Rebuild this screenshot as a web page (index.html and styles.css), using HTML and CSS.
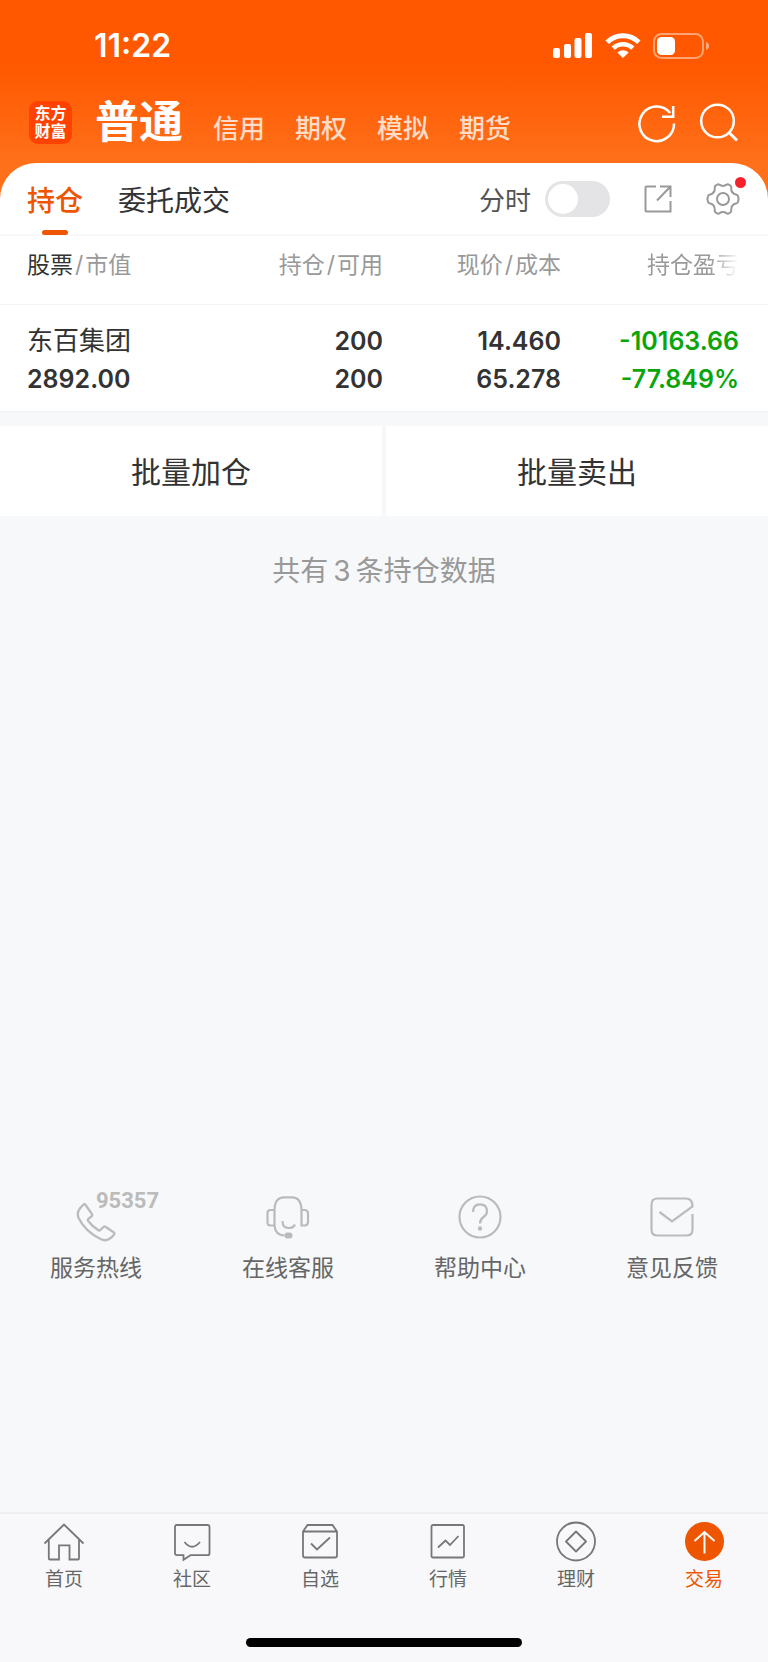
FILE: index.html
```html
<!DOCTYPE html>
<html lang="zh-CN">
<head>
<meta charset="utf-8">
<meta name="viewport" content="width=device-width, initial-scale=1">
<title>普通交易 - 持仓</title>
<link rel="stylesheet" href="styles.css">
</head>
<body>
<header class="top">
  <div class="status">
    <time class="clock">11:22</time>
    <div class="signals">
      <svg width="40" height="26" viewBox="0 0 40 26" fill="#fff" aria-hidden="true">
        <rect x="0" y="15" width="7" height="10" rx="2"/><rect x="11" y="11" width="7" height="14" rx="2"/><rect x="21.500" y="5" width="7" height="20" rx="2"/><rect x="32" y="0" width="7" height="25" rx="2"/>
      </svg>
      <svg width="36" height="26" viewBox="0 0 36 26" fill="none" stroke="#fff" aria-hidden="true">
        <path d="M2.200 9.200A22.500 22.500 0 0 1 33.800 9.200" stroke-width="5"/>
        <path d="M8.200 15.200A14 14 0 0 1 27.800 15.200" stroke-width="4.600"/>
        <path d="M18 25l-5.600-5.500a8 8 0 0 1 11.200 0z" fill="#fff" stroke="none"/>
      </svg>
      <svg width="57" height="26" viewBox="0 0 57 26" aria-hidden="true">
        <rect x="1" y="1" width="49" height="24" rx="7.500" fill="none" stroke="#fff" stroke-opacity=".45" stroke-width="2"/>
        <rect x="4" y="4" width="18" height="18" rx="4.500" fill="#fff"/>
        <path d="M53 9q3 1.200 3 4t-3 4z" fill="#fff" fill-opacity=".5"/>
      </svg>
    </div>
  </div>
  <div class="bar">
    <div class="logo">东方<br>财富</div>
    <nav class="accounts">
      <a class="account current" href="#">普通</a>
      <a class="account" href="#">信用</a>
      <a class="account" href="#">期权</a>
      <a class="account" href="#">模拟</a>
      <a class="account" href="#">期货</a>
    </nav>
    <button class="icon-btn" aria-label="刷新">
      <svg width="40" height="40" viewBox="0 0 40 40" fill="none" stroke="#fff" stroke-width="2.500">
        <path d="M37 20.500A17.300 17.300 0 1 1 33.200 10"/><path d="M36.200 3v10.700H25"/>
      </svg>
    </button>
    <button class="icon-btn" aria-label="搜索">
      <svg width="40" height="40" viewBox="0 0 40 40" fill="none" stroke="#fff" stroke-width="2.500">
        <circle cx="18.500" cy="18" r="16.300"/><path d="M29.500 29l8.500 8.500" stroke-width="3"/>
      </svg>
    </button>
  </div>
</header>

<main class="sheet">
  <div class="tabs">
    <a class="tab active" href="#">持仓</a>
    <a class="tab" href="#">委托成交</a>
    <label class="chart-label" for="chart">分时</label>
    <input class="switch" id="chart" type="checkbox" role="switch">
    <button class="icon-btn share" aria-label="分享">
      <svg width="28" height="28" viewBox="0 0 28 28" fill="none" stroke="#999" stroke-width="2">
        <path d="M12 1.500H2.500q-1 0-1 1v23q0 1 1 1h24v-10.500"/><path d="M16 1.500h10.500V12M26.500 1.500L13 15.500"/>
      </svg>
    </button>
    <button class="icon-btn settings" aria-label="设置">
      <svg width="34" height="34" viewBox="0 0 34 34" fill="none" stroke="#999" stroke-width="2" stroke-linejoin="round">
        <path d="M11.500 2.500Q12.500 2 13.300 2.700Q17 5.200 20.700 2.700Q21.500 2 22.500 2.500L24.500 3.700Q25.500 4.300 25.200 5.500Q24.800 11.500 30.500 12.700Q31.800 13 32 14.200L32.600 17L32 19.800Q31.800 21 30.500 21.300Q24.800 22.500 25.200 28.500Q25.500 29.700 24.500 30.300L22.500 31.500Q21.500 32 20.700 31.300Q17 28.800 13.300 31.300Q12.500 32 11.500 31.500L9.500 30.300Q8.500 29.700 8.800 28.500Q9.200 22.500 3.500 21.300Q2.200 21 2 19.800L1.400 17L2 14.200Q2.200 13 3.500 12.700Q9.200 11.500 8.800 5.500Q8.500 4.300 9.500 3.700Z"/>
        <circle cx="17" cy="17" r="6"/>
      </svg>
      <span class="dot"></span>
    </button>
  </div>

  <table class="holdings">
    <thead>
      <tr>
        <th><span class="strong">股票</span><span class="slash">/</span>市值</th>
        <th>持仓<span class="slash">/</span>可用</th>
        <th>现价<span class="slash">/</span>成本</th>
        <th><span class="fade">持仓盈亏</span></th>
      </tr>
    </thead>
    <tbody>
      <tr class="first"><td class="name">东百集团</td><td>200</td><td>14.460</td><td class="loss">-10163.66</td></tr>
      <tr class="second"><td>2892.00</td><td>200</td><td>65.278</td><td class="loss">-77.849%</td></tr>
    </tbody>
  </table>

  <div class="batch">
    <button class="batch-btn">批量加仓</button>
    <button class="batch-btn">批量卖出</button>
  </div>
  <p class="note">共有<span class="count">3</span>条持仓数据</p>

  <nav class="services">
    <a class="service" href="#">
      <span class="service-icon">
        <svg class="phone" width="44" height="44" viewBox="0 0 44 44" fill="none" stroke="#bbb" stroke-width="2.300" stroke-linejoin="round">
          <path d="M9.300 9.800Q10.500 8.600 11.600 10L18 19.200Q18.700 20.300 17.800 21.200L14.200 24Q13.400 24.800 14 25.700Q18.500 31.500 24.400 35.300Q25.300 36 26.100 35.200L29.500 32Q30.400 31 31.500 31.700L39.500 37.200Q41.200 38.600 39.800 40Q33.500 47.500 27 44.300Q11.500 37 4.300 22.500Q2 15.500 9.300 9.800Z"/>
        </svg>
        <span class="hotline">95357</span>
      </span>服务热线</a>
    <a class="service" href="#">
      <span class="service-icon">
        <svg width="44" height="44" viewBox="0 0 44 44" fill="none" stroke="#bbb" stroke-width="2.200">
          <path d="M8.500 31V16Q8.500 2.300 18 2.300H26Q35.500 2.300 35.500 16V30.500H38.500Q42 30.500 42 27V18.500Q42 15 38.500 15H35.500M8.500 15H4.500Q1.500 15 1.500 18V27.500Q1.500 30.500 4.500 30.500H8.500Q9 40 18.500 40.500"/>
          <path d="M16.500 26Q16.500 33 22.500 33Q27.500 33 29 29.500"/><rect x="18.500" y="37.500" width="8" height="6" rx="3" fill="#bbb" stroke="none"/>
        </svg>
      </span>在线客服</a>
    <a class="service" href="#">
      <span class="service-icon">
        <svg width="44" height="44" viewBox="0 0 44 44" fill="none" stroke="#bbb" stroke-width="2.200">
          <circle cx="22" cy="22" r="20.500"/><path d="M15 17Q15 9.300 22 9.300T29 16.500Q29 19.500 25.500 22T22 28.500"/><circle cx="22" cy="33.500" r="2.200" fill="#bbb" stroke="none"/>
        </svg>
      </span>帮助中心</a>
    <a class="service" href="#">
      <span class="service-icon">
        <svg width="44" height="44" viewBox="0 0 44 44" fill="none" stroke="#bbb" stroke-width="2.200">
          <path d="M42.500 19V34.500Q42.500 40.500 36.500 40.500H7.500Q1.500 40.500 1.500 34.500V9.500Q1.500 3.500 7.500 3.500H36Q42.500 3.500 42.500 11.500L22 26.500L9.500 17"/>
        </svg>
      </span>意见反馈</a>
  </nav>
</main>

<footer class="bottom">
  <nav class="tabbar">
    <a class="item" href="#">
      <svg width="42" height="42" viewBox="0 0 42 42" fill="none" stroke="#777" stroke-width="1.800"><path d="M1.500 22.500L21 3.500l19.500 19M5.800 19v18.500Q5.800 38.500 6.800 38.500H16V24.300h10.500v14.200H35q1 0 1-1V19"/></svg>首页</a>
    <a class="item" href="#">
      <svg width="42" height="42" viewBox="0 0 42 42" fill="none" stroke="#777" stroke-width="1.800"><path d="M5.500 4h31q2 0 2 2v26.200q0 2-2 2H19.500L12.500 38.800v-4.600H6q-2 0-2-2V6q0-2 1.500-2z"/><path d="M13.500 21q7.500 9.500 15.500 0"/></svg>社区</a>
    <a class="item" href="#">
      <svg width="42" height="42" viewBox="0 0 42 42" fill="none" stroke="#777" stroke-width="1.800"><path d="M4 10.500L8.500 4h25L38 10.500V34.500q0 2-2 2H6q-2 0-2-2zM4 10.500h34"/><path d="M12 22.500l6 6L31 16.500"/></svg>自选</a>
    <a class="item" href="#">
      <svg width="42" height="42" viewBox="0 0 42 42" fill="none" stroke="#777" stroke-width="1.800"><rect x="4.500" y="4" width="32.500" height="32.500" rx="1.500"/><path d="M11 26.500l7.500-7 4.500 4.500L31.500 15"/></svg>行情</a>
    <a class="item" href="#">
      <svg width="42" height="42" viewBox="0 0 42 42" fill="none" stroke="#777" stroke-width="1.800" stroke-linejoin="round"><circle cx="21" cy="20.500" r="19"/><path d="M21 10.500l10 10-10 10-10-10z"/></svg>理财</a>
    <a class="item on" href="#">
      <svg width="42" height="42" viewBox="0 0 42 42" fill="none"><circle cx="21.500" cy="20.500" r="19.500" fill="#ee5500"/><path d="M21.500 32.500V12M11.500 20l10-9 10 9" stroke="#fff" stroke-width="2"/></svg>交易</a>
  </nav>
  <div class="home-indicator"></div>
</footer>
</body>
</html>
```
FILE: styles.css
```css
* { box-sizing: border-box; }
body {
  margin: 0;
  min-height: 100vh;
  display: flex;
  flex-direction: column;
  background: #f7f8fa;
  color: #333;
  font-family: Inter, "Noto Sans CJK SC", sans-serif;
}
a { color: inherit; text-decoration: none; }
button { font: inherit; color: inherit; border: 0; padding: 0; background: none; }
svg { display: block; }

.top {
  background: linear-gradient(#ff5800 64px, #ff701a 164px);
  color: #fff;
  padding-bottom: 40px;
}
.status {
  height: 92px;
  padding: 0 58px 0 94px;
  display: flex;
  align-items: center;
  justify-content: space-between;
}
.clock { font-size: 32px; font-weight: 600; line-height: 40px; }
.signals { display: flex; gap: 12px; }
.bar {
  height: 71px;
  padding: 0 29px 10px;
  display: flex;
  align-items: center;
}
.logo {
  width: 43px;
  height: 43px;
  border-radius: 9px;
  background: #ff4200;
  padding-top: 3px;
  font-size: 16px;
  line-height: 18px;
  font-weight: 700;
  text-align: center;
}
.accounts {
  flex: 1;
  display: flex;
  align-items: baseline;
  gap: 30px;
  margin-left: 23px;
  padding-top: 6px;
}
.account { font-size: 26px; line-height: 60px; font-weight: 500; color: #ffdcc8; }
.account.current { font-size: 44px; font-weight: 700; color: #fff; }
.bar .icon-btn { margin-left: 22px; }

.sheet {
  flex: 1;
  display: flex;
  flex-direction: column;
  margin-top: -40px;
  border-radius: 36px 36px 0 0;
  background: linear-gradient(#fff 120px, #f7f8fa 120px);
}
.tabs {
  height: 73px;
  padding: 0 28px 0 27px;
  display: flex;
  align-items: center;
  border-bottom: 2px solid #f7f7f9;
}
.tab {
  height: 72px;
  display: flex;
  align-items: center;
  font-size: 28px;
  margin-right: 35px;
}
.tab.active { position: relative; color: #ee5500; font-weight: 500; }
.tab.active::after {
  content: "";
  position: absolute;
  left: 50%;
  bottom: 0;
  width: 26px;
  height: 5px;
  margin-left: -13px;
  border-radius: 3px;
  background: #ee5500;
}
.chart-label { margin-left: auto; font-size: 26px; color: #555; }
.switch {
  appearance: none;
  width: 65px;
  height: 36px;
  margin: 0 0 0 14px;
  padding: 3px;
  border-radius: 18px;
  background: #e4e4e7;
}
.switch::before {
  content: "";
  display: block;
  width: 30px;
  height: 30px;
  border-radius: 50%;
  background: #fff;
}
.switch:checked { background: #ee5500; }
.switch:checked::before { margin-left: auto; }
.share { margin-left: 34px; }
.settings { position: relative; margin-left: 34px; }
.dot {
  position: absolute;
  top: -5px;
  right: -6px;
  width: 11px;
  height: 11px;
  border-radius: 50%;
  background: #f5222d;
}

.holdings {
  width: 100%;
  padding: 0 29px 0 27px;
  table-layout: fixed;
  border-spacing: 0;
  background:
    linear-gradient(#f2f3f5, #f2f3f5) 0 68px / 100% 1px no-repeat,
    #fff;
  border-bottom: 1px solid #f0f1f4;
  text-align: right;
}
.holdings th, .holdings td { padding: 0; text-align: right; white-space: nowrap; }
.holdings th:first-child, .holdings td:first-child { text-align: left; }
.holdings th {
  height: 69px;
  padding-top: 12px;
  vertical-align: top;
  font-size: 23px;
  line-height: 34px;
  font-weight: 400;
  color: #999;
}
.strong { color: #333; }
.slash { margin: 0 2px; }
.fade {
  -webkit-mask-image: linear-gradient(90deg, #000 68%, transparent);
  mask-image: linear-gradient(90deg, #000 68%, transparent);
}
.holdings td { font-size: 25px; font-weight: 600; line-height: 38px; }
.holdings .first td { padding-top: 17px; }
.holdings .second td { padding-bottom: 13px; }
.holdings .name { font-size: 26px; font-weight: 400; }
.holdings .loss { color: #0aa50a; }

.batch { display: flex; gap: 4px; margin-top: 14px; }
.batch-btn { flex: 1; height: 90px; padding-bottom: 2px; background: #fff; font-size: 30px; }
.note {
  margin: 35px 0 auto;
  text-align: center;
  font-size: 28px;
  line-height: 40px;
  color: #999;
}
.count { margin: 0 5px; }

.services { display: flex; margin-bottom: 227px; }
.service {
  flex: 1;
  display: flex;
  flex-direction: column;
  align-items: center;
  gap: 12px;
  font-size: 23px;
  line-height: 34px;
  color: #666;
}
.service-icon { position: relative; }
.phone { overflow: visible; }
.hotline {
  position: absolute;
  left: 22px;
  top: -5px;
  font: 700 22px/22px Roboto, sans-serif;
  color: #bbb;
}

.bottom { border-top: 2px solid #eeeef0; background: #f8f8fa; }
.tabbar { display: flex; padding-top: 7px; }
.item {
  flex: 1;
  display: flex;
  flex-direction: column;
  align-items: center;
  gap: 3px;
  font-size: 19px;
  line-height: 28px;
  color: #666;
}
.item.on { color: #ee5500; }
.home-indicator {
  width: 36%;
  height: 9px;
  margin: 44px auto 15px;
  border-radius: 5px;
  background: #000;
}
```
